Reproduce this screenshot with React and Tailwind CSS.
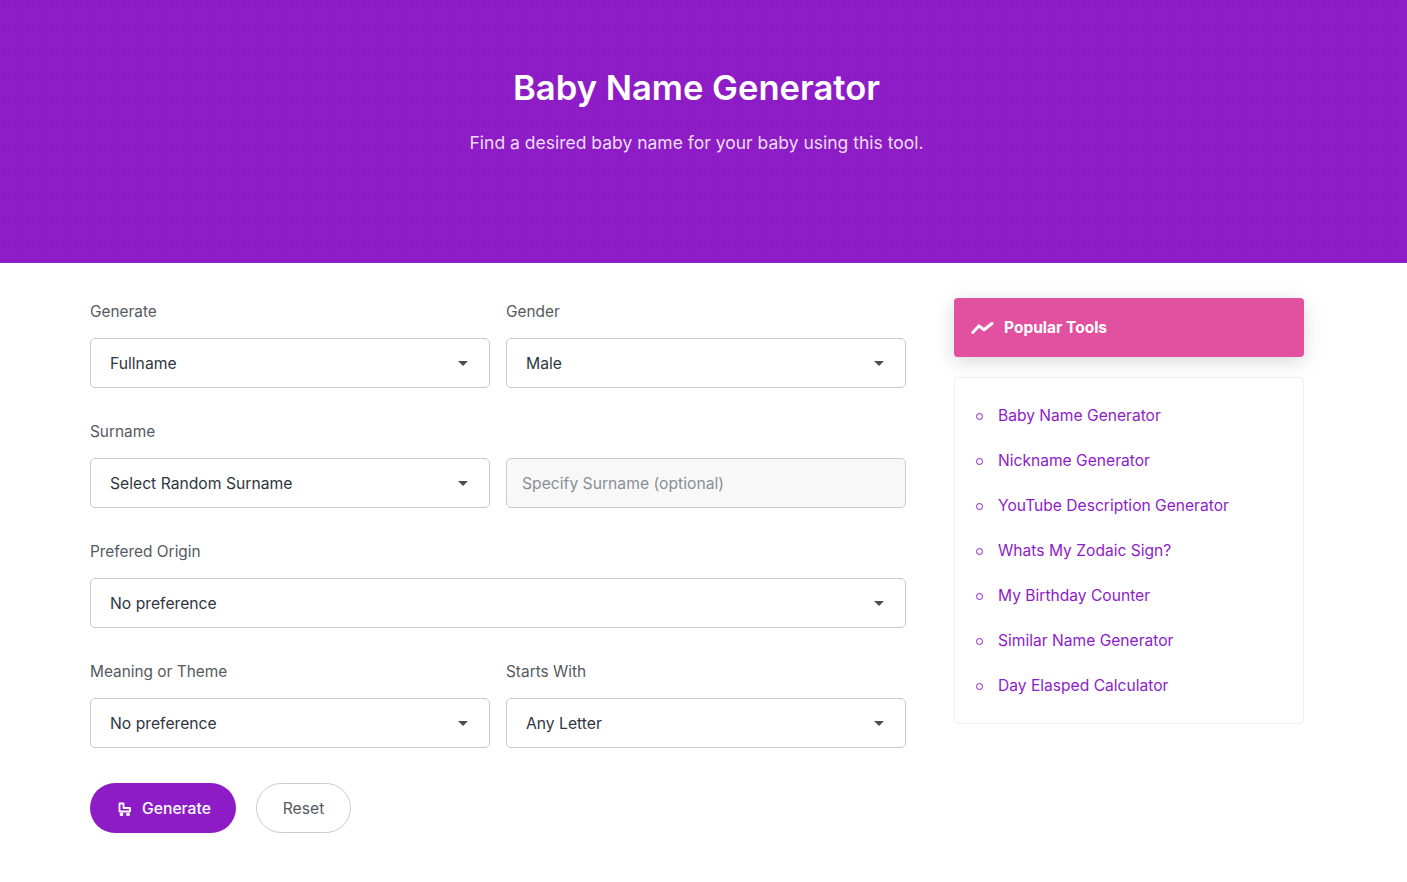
import React from 'react';

const tools = [
    'Baby Name Generator',
    'Nickname Generator',
    'YouTube Description Generator',
    'Whats My Zodaic Sign?',
    'My Birthday Counter',
    'Similar Name Generator',
    'Day Elasped Calculator',
];

const Field = ({ label, className = '', children }) => (
    <div className={className}>
        <div className="h-[22px] mb-[16px] pt-[1px] text-[15.4px] leading-[22px] text-[#555a60]">{label || '\u00a0'}</div>
        {children}
    </div>
);

const SelectBox = ({ value }) => (
    <div className="h-[50px] flex items-center justify-between pl-[19px] pr-[21px] pt-[1px] bg-white border border-[#cccccc] rounded-[5px] text-[15.7px] text-[#2f3640]">
        <span>{value}</span>
        <span className="w-0 h-0 border-x-[5.5px] border-x-transparent border-t-[5px] border-t-[#4a4f55]" />
    </div>
);

const App = () => {
    return (
        <div className="min-h-[882px] bg-white font-['Inter','Noto_Sans',sans-serif]">
            <header className="h-[263px] pt-[65px] flex flex-col items-center bg-[#8e1cc6] bg-[repeating-linear-gradient(0deg,rgba(255,255,255,0.018)_0_1px,transparent_1px_12px),repeating-linear-gradient(90deg,rgba(255,255,255,0.018)_0_1px,transparent_1px_12px)]">
                <h1 className="pr-[14px] text-[34.6px] leading-[44px] font-semibold text-white">Baby Name Generator</h1>
                <p className="mt-[23px] pr-[14px] text-[17.5px] leading-[22px] text-[#ecdcf5]">Find a desired baby name for your baby using this tool.</p>
            </header>

            <main className="flex gap-[48px] pl-[90px] pt-[35px]">
                <div className="w-[816px]">
                    <div className="grid grid-cols-2 gap-x-[16px] gap-y-[32px] pt-[2px]">
                        <Field label="Generate"><SelectBox value="Fullname" /></Field>
                        <Field label="Gender"><SelectBox value="Male" /></Field>
                        <Field label="Surname"><SelectBox value="Select Random Surname" /></Field>
                        <Field>
                            <div className="h-[50px] flex items-center pl-[15px] pt-[1px] bg-[#f8f8f8] border border-[#cccccc] rounded-[5px] text-[15.7px] text-[#8a8f96]">Specify Surname (optional)</div>
                        </Field>
                        <Field label="Prefered Origin" className="col-span-2"><SelectBox value="No preference" /></Field>
                        <Field label="Meaning or Theme"><SelectBox value="No preference" /></Field>
                        <Field label="Starts With"><SelectBox value="Any Letter" /></Field>
                    </div>
                    <div className="flex gap-[20px] mt-[35px]">
                        <button className="w-[146px] h-[50px] flex items-center gap-[10px] pl-[28px] pt-[1px] rounded-full bg-[#8e1cc6] text-[15.7px] font-medium text-white">
                            <svg width="14" height="14" viewBox="0 0 14 14" fill="none" stroke="white" strokeWidth="1.800" strokeLinejoin="round">
                                <path d="M1.500 1.500h4v4.500h6.500v3.500H1.500z" />
                                <circle cx="3.500" cy="12.300" r="1" />
                                <circle cx="10" cy="12.300" r="1" />
                            </svg>
                            Generate
                        </button>
                        <button className="w-[95px] h-[50px] pt-[1px] rounded-full bg-white border border-[#cccccc] text-[15.7px] text-[#555a60]">Reset</button>
                    </div>
                </div>

                <aside className="w-[350px]">
                    <div className="h-[59px] flex items-center gap-[10px] pl-[17px] bg-[#e2519f] rounded-[4px] shadow-[0_5px_20px_rgba(0,0,0,0.15)]">
                        <svg width="23" height="14" viewBox="0 0 23 14" fill="none" stroke="white" strokeWidth="3" strokeLinecap="round" strokeLinejoin="round">
                            <path d="M1.800 11.500L8 4.800l5 4L21 2.500" />
                        </svg>
                        <span className="text-[15.5px] font-bold text-white">Popular Tools</span>
                    </div>
                    <ul className="mt-[20px] h-[347px] pt-[15px] pl-[21px] bg-white border border-[#f0f0f0] rounded-[4px]">
                        {tools.map(tool => (
                            <li key={tool} className="h-[45px] flex items-center gap-[15px] text-[15.6px] text-[#8e1cc6]">
                                <span className="w-[7px] h-[7px] mt-[2px] rounded-full border border-[#8e1cc6]" />
                                {tool}
                            </li>
                        ))}
                    </ul>
                </aside>
            </main>
        </div>
    );
};

export default App;
